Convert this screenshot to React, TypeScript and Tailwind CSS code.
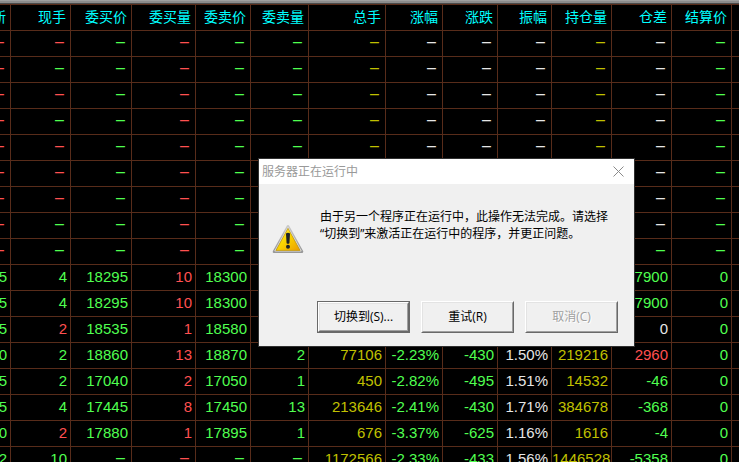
import React from 'react'
import clsx from 'clsx'

const headers = ['新', '现手', '委买价', '委买量', '委卖价', '委卖量', '总手', '涨幅', '涨跌', '振幅', '持仓量', '仓差', '结算价']

const colors: Record<string, string> = {
  r: 'text-[#ff5050]',
  g: 'text-[#50ff50]',
  y: 'text-[#c0c000]',
  w: 'text-[#e6e6e6]',
}

// one colour letter per column
const rows: { tone: string; cells?: string[] }[] = [
  { tone: 'rrgrggywwwywg' },
  { tone: 'rggrggywwwywg' },
  { tone: 'rrgrggywwwywg' },
  { tone: 'rggrggywwwywg' },
  { tone: 'rrgrggywwwywg' },
  { tone: 'rrgrggywwwywg' },
  { tone: 'rrgrggywwwywg' },
  { tone: 'rggrggywwwywg' },
  { tone: 'rggrggywwwygg' },
  { tone: 'gggrggyggwygg', cells: ['5', '4', '18295', '10', '18300', '', '', '', '', '', '', '-7900', '0'] },
  { tone: 'gggrggyggwygg', cells: ['5', '4', '18295', '10', '18300', '', '', '', '', '', '', '-7900', '0'] },
  { tone: 'grgrggyggwywg', cells: ['5', '2', '18535', '1', '18580', '', '', '', '', '', '', '0', '0'] },
  { tone: 'gggrggyggwyrg', cells: ['0', '2', '18860', '13', '18870', '2', '77106', '-2.23%', '-430', '1.50%', '219216', '2960', '0'] },
  { tone: 'gggrggyggwygg', cells: ['5', '2', '17040', '2', '17050', '1', '450', '-2.82%', '-495', '1.51%', '14532', '-46', '0'] },
  { tone: 'gggrggyggwygg', cells: ['5', '4', '17445', '8', '17450', '13', '213646', '-2.41%', '-430', '1.71%', '384678', '-368', '0'] },
  { tone: 'grgrggyggwygg', cells: ['0', '2', '17880', '1', '17895', '1', '676', '-3.37%', '-625', '1.16%', '1616', '-4', '0'] },
  { tone: 'gggrggyggwygg', cells: ['2', '10', '–', '–', '–', '–', '1172566', '-2.33%', '-433', '1.56%', '1446528', '-5358', '0'] },
]

const line = 'border-r border-b border-[#582c1a]'

const QuoteTable = () => {
  return (
    <table className="-ml-[50px] w-[calc(100%+50px)] table-fixed border-separate border-spacing-0 border-t border-[#582c1a] font-['Liberation_Sans','Noto_Sans_CJK_SC',sans-serif]">
      <colgroup>
        <col className="w-[61px]" />
        <col className="w-[60px]" />
        <col className="w-[61px]" />
        <col className="w-[64px]" />
        <col className="w-[55px]" />
        <col className="w-[58px]" />
        <col className="w-[77px]" />
        <col className="w-[57px]" />
        <col className="w-[55px]" />
        <col className="w-[54px]" />
        <col className="w-[60px]" />
        <col className="w-[60px]" />
        <col className="w-[60px]" />
        <col />
      </colgroup>
      <thead>
        <tr className="h-[26px]">
          {headers.map((h) => (
            <th key={h} scope="col" className={clsx(line, 'p-0 pr-1 pb-0.5 text-right text-sm leading-5 font-normal whitespace-nowrap text-[#00ffff]')}>
              {h}
            </th>
          ))}
          <td className="border-b border-[#582c1a] p-0"></td>
        </tr>
      </thead>
      <tbody>
        {rows.map((row, i) => (
          <tr key={i} className="h-[26px]">
            {headers.map((h, c) => {
              const value = row.cells ? row.cells[c] : '–'
              return (
                <td
                  key={h}
                  className={clsx(
                    line,
                    'p-0 text-right leading-5 whitespace-nowrap',
                    value === '–' ? 'pr-1.5 pb-1 text-[16px]' : 'pr-[3px] pb-0.5 text-[15px]',
                    colors[row.tone[c]],
                  )}
                >
                  {value}
                </td>
              )
            })}
            <td className="border-b border-[#582c1a] p-0"></td>
          </tr>
        ))}
      </tbody>
    </table>
  )
}

const WarningIcon = () => (
  <svg width="32" height="32" viewBox="0 0 32 32" aria-hidden="true">
    <defs>
      <linearGradient id="amber" x1="0" y1="0" x2="1" y2="1">
        <stop offset="0" stopColor="#fff36a" />
        <stop offset="0.45" stopColor="#fbd800" />
        <stop offset="1" stopColor="#eb9c00" />
      </linearGradient>
      <linearGradient id="rim" x1="0" y1="0" x2="0" y2="1">
        <stop offset="0" stopColor="#c8c8c8" />
        <stop offset="1" stopColor="#989898" />
      </linearGradient>
    </defs>
    <path d="M16 2.6 2.2 27.6h27.6Z" fill="url(#rim)" stroke="url(#rim)" strokeWidth="3" strokeLinejoin="round" />
    <path d="M16 3.2 2.8 27h26.4Z" fill="none" stroke="#dcdcdc" strokeWidth="1" strokeLinejoin="round" />
    <path d="M16 4.4 4 26.4h24Z" fill="url(#amber)" stroke="#c79a00" strokeWidth="0.7" strokeLinejoin="round" />
    <path d="M14 9.600q2-1.600 4 0l-.6 9.600q-1.400 1-2.800 0Z" fill="#1d2226" />
    <circle cx="16" cy="22.800" r="2" fill="#1d2226" />
  </svg>
)

const raised = 'border border-t-white border-l-white border-r-[#696969] border-b-[#696969]'
const inner = 'flex h-full w-full items-center justify-center border border-t-[#e3e3e3] border-l-[#e3e3e3] border-r-[#a0a0a0] border-b-[#a0a0a0]'

const Dialog = () => {
  return (
    <div
      role="dialog"
      aria-labelledby="dialog-title"
      className="absolute top-[159px] left-[259px] w-[375px] bg-[#f0f0f0] font-['Open_Sans','Noto_Sans_CJK_SC',sans-serif] text-xs text-black outline outline-[#303030]"
    >
      <div className="flex h-[25px] items-center justify-between bg-white pr-2.5 pl-[3px]">
        <h1 id="dialog-title" className="leading-4 text-[#999999]">服务器正在运行中</h1>
        <button aria-label="关闭" className="p-0">
          <svg width="11" height="11" viewBox="0 0 11 11" fill="none" stroke="#8a8a8a" strokeWidth="1">
            <path d="M.5.5l10 10M10.5.5l-10 10" />
          </svg>
        </button>
      </div>
      <div className="flex gap-4 pt-6 pl-[13px]">
        <div className="pt-4">
          <WarningIcon />
        </div>
        <p className="leading-[17px] whitespace-nowrap">
          由于另一个程序正在运行中，此操作无法完成。请选择
          <br />
          “切换到”来激活正在运行中的程序，并更正问题。
        </p>
      </div>
      <div className="flex justify-end gap-[11px] pt-[45px] pr-4 pb-[13px]">
        <button className="h-8 w-[93px] border border-[#696969]">
          <span className={clsx(raised, 'block h-full w-full')}>
            <span className={inner}>切换到(S)...</span>
          </span>
        </button>
        <button className={clsx(raised, 'h-8 w-[93px]')}>
          <span className={inner}>重试(R)</span>
        </button>
        <button disabled className={clsx(raised, 'h-8 w-[93px] text-[#a0a0a0] [text-shadow:1px_1px_0_#fff]')}>
          <span className={inner}>取消(C)</span>
        </button>
      </div>
    </div>
  )
}

const App = () => {
  return (
    <main className="relative h-screen overflow-hidden bg-black">
      <div className="h-1 border-y border-t-[#a0a0a0] border-b-[#4a4a4a] bg-[#8c8c8c]"></div>
      <QuoteTable />
      <Dialog />
    </main>
  )
}

export default App
